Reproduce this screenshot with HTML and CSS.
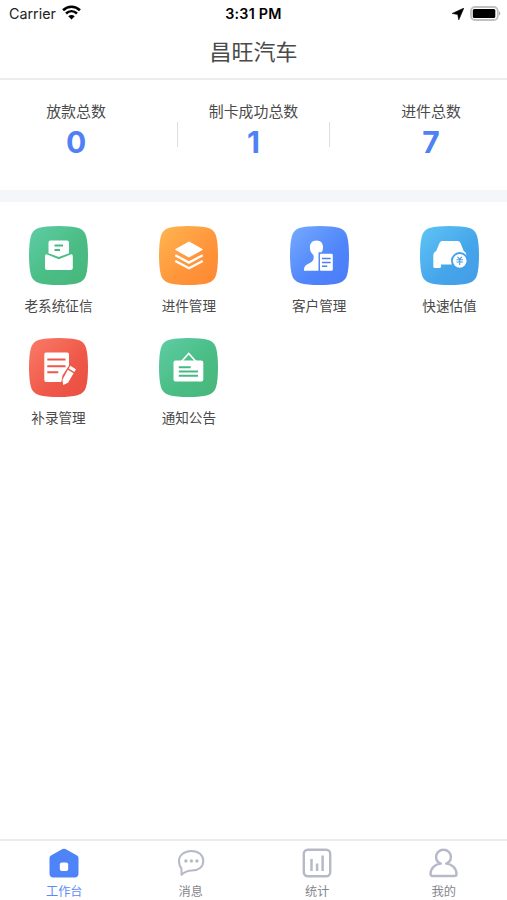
FILE: index.html
```html
<!DOCTYPE html>
<html lang="zh-CN">
<head>
<meta charset="utf-8">
<title>昌旺汽车</title>
<link rel="stylesheet" href="styles.css">
</head>
<body>
<svg class="defs" width="0" height="0" aria-hidden="true">
  <defs>
    <linearGradient id="green" x1="0" y1="0" x2="1" y2="1"><stop offset="0" stop-color="#5fcda6"/><stop offset=".55" stop-color="#4abd85"/><stop offset="1" stop-color="#48b67a"/></linearGradient>
    <linearGradient id="orange" x1="0" y1="0" x2="1" y2="1"><stop offset="0" stop-color="#ffb650"/><stop offset=".6" stop-color="#ff943a"/><stop offset="1" stop-color="#ff8833"/></linearGradient>
    <linearGradient id="blue" x1="0" y1="0" x2="1" y2="1"><stop offset="0" stop-color="#75aaff"/><stop offset=".6" stop-color="#5085fa"/><stop offset="1" stop-color="#4a7bf8"/></linearGradient>
    <linearGradient id="sky" x1="0" y1="0" x2="1" y2="1"><stop offset="0" stop-color="#5fc4f5"/><stop offset=".6" stop-color="#45a5ea"/><stop offset="1" stop-color="#449ce7"/></linearGradient>
    <linearGradient id="red" x1="0" y1="0" x2="1" y2="1"><stop offset="0" stop-color="#fa7b67"/><stop offset=".6" stop-color="#ef5848"/><stop offset="1" stop-color="#e94e42"/></linearGradient>
    <path id="tile" d="M29.500 0C38 0 44.500.7 48.500 1.800C53.300 3.200 55.800 5.700 57.200 10.500C58.300 14.500 59 21 59 29.500C59 38 58.300 44.500 57.200 48.500C55.800 53.300 53.300 55.800 48.500 57.200C44.500 58.300 38 59 29.500 59C21 59 14.500 58.300 10.500 57.200C5.700 55.800 3.200 53.300 1.800 48.500C.7 44.500 0 38 0 29.500C0 21 .7 14.500 1.800 10.500C3.200 5.700 5.700 3.200 10.500 1.800C14.500.7 21 0 29.500 0Z"/>
  </defs>
</svg>
<div class="app">
  <div class="status">
    <div class="carrier">Carrier
      <svg width="19" height="15" viewBox="0 0 18 14"><path d="M1 4.800C5.600.4 12.400.4 17 4.800M3.800 7.900C6.900 5.100 11.100 5.100 14.200 7.900" fill="none" stroke="#000" stroke-width="2.500"/><path d="M9 13.700L5.900 10.600Q9 8.200 12.100 10.600Z"/></svg>
    </div>
    <div class="time">3:31 PM</div>
    <div class="power">
      <svg width="12" height="12" viewBox="0 0 11 11"><path d="M10.900.1L6.200 10.900L5.200 5.900L.1 5Z" stroke="#000" stroke-width=".5" stroke-linejoin="round"/></svg>
      <svg width="31" height="15" viewBox="0 0 31 15"><rect x="1" y="1" width="26.800" height="13" rx="4" fill="#fff" stroke="#c0c0c0" stroke-width="1.800"/><rect x="2.800" y="2.900" width="22.500" height="9.200" rx="1.500"/><path d="M29 5Q31.500 7.300 29 9.700Z" fill="#aaa"/></svg>
    </div>
  </div>
  <h1 class="title">昌旺汽车</h1>

  <section class="stats">
    <div class="stat"><span>放款总数</span><b>0</b></div>
    <div class="stat middle">
      <i class="divider"></i>
      <div class="stat"><span>制卡成功总数</span><b>1</b></div>
      <i class="divider"></i>
    </div>
    <div class="stat"><span>进件总数</span><b>7</b></div>
  </section>

  <main class="menu">
    <a class="entry">
      <svg class="tile" viewBox="0 0 59 59"><use href="#tile" fill="url(#green)"/>
        <path fill="#fff" d="M21.500 14.500H38Q40 14.500 40 16.500V27.200L29.800 31L19.500 27.200V16.500Q19.500 14.500 21.500 14.500ZM17.500 28.300L29.800 33.300L42.200 28.300Q43.800 28.300 43.800 30V42Q43.800 44 41.800 44H18Q16 44 16 42V30Q16 28.300 17.500 28.300Z"/>
        <path d="M25.500 19.500H34M25.500 23.900H31" stroke="#49b984" stroke-width="2"/></svg>
      <span>老系统征信</span>
    </a>
    <a class="entry">
      <svg class="tile" viewBox="0 0 59 59"><use href="#tile" fill="url(#orange)"/>
        <path fill="#fff" stroke="#fff" stroke-linejoin="round" d="M30 16L43.500 23.500L30 31L16.500 23.500Z"/>
        <path fill="none" stroke="#fff" stroke-width="2.300" d="M16.300 29.300L30 36.600L43.700 29.300M16.300 34.900L30 42.200L43.700 34.900"/></svg>
      <span>进件管理</span>
    </a>
    <a class="entry">
      <svg class="tile" viewBox="0 0 59 59"><use href="#tile" fill="url(#blue)"/>
        <path fill="#fff" d="M26.500 14.500C30.800 14.500 33.200 17.500 33 21.500C32.900 24.200 32.300 25.300 31.500 26.300H28.500V44.800H14Q13.500 40.500 17 38.500L21.500 36C23.500 34.700 24.300 31.500 23.300 29C20.900 26.800 19.900 24.500 19.900 21.300C19.900 17.300 22.300 14.500 26.500 14.500ZM31 27.800H41.500Q42.800 27.800 42.800 29V43.600Q42.800 44.800 41.500 44.800H31Q30 44.800 30 43.600V29Q30 27.800 31 27.800Z"/>
        <path d="M32 32.500H40.700M32 36.500H40.700M32 40.300H37.300" stroke="#4d7ff8" stroke-width="1.500"/></svg>
      <span>客户管理</span>
    </a>
    <a class="entry">
      <svg class="tile" viewBox="0 0 59 59"><use href="#tile" fill="url(#sky)"/>
        <path fill="#fff" d="M22.500 15H37.500Q39.700 15 40.500 17L43.600 24.800Q46.300 26 46.300 29V38.500H21V40.500Q21 42 19.500 42H14.800Q13.300 42 13.300 40.500V30Q13 26.800 16.300 24.800L19.500 17Q20.300 15 22.500 15Z"/>
        <circle cx="39.700" cy="34.800" r="8.700" fill="#459fe8"/><circle cx="39.700" cy="34.800" r="6.900" fill="#fff"/>
        <path d="M37.500 30.800L39.700 33.200L41.900 30.800M36.500 33.700H42.900M36.500 36H42.900M39.700 33.200V39" fill="none" stroke="#459fe8" stroke-width="1.100"/></svg>
      <span>快速估值</span>
    </a>
    <a class="entry">
      <svg class="tile" viewBox="0 0 59 59"><use href="#tile" fill="url(#red)"/>
        <path fill="#fff" d="M17 14.600H38.200Q40 14.600 40 16.500V27.500L33.500 37.500L32.300 44H17Q15.300 44 15.300 42V16.500Q15.300 14.600 17 14.600Z"/>
        <path d="M18.300 21.600H36.500M18.300 28.200H36.500M18.300 34.200H29.300" stroke="#ee5747" stroke-width="2"/>
        <path fill="#fff" d="M41.300 27.800L46.900 31.300L45.400 34L39.700 30.500ZM38.900 31.800L44.600 35.300L39 44.800L34.300 47L33.400 41.800Z"/></svg>
      <span>补录管理</span>
    </a>
    <a class="entry">
      <svg class="tile" viewBox="0 0 59 59"><use href="#tile" fill="url(#green)"/>
        <path fill="none" stroke="#fff" stroke-width="1.700" d="M22.500 23.500L29.700 15.500L37 23.500"/>
        <rect x="14.500" y="22.500" width="29.800" height="21" rx="2" fill="#fff"/>
        <path d="M19.800 29.300H31.700M19.800 33.500H39M19.800 37.700H39" stroke="#49b984" stroke-width="1.900"/></svg>
      <span>通知公告</span>
    </a>
  </main>

  <nav class="tabs">
    <a class="tab active">
      <svg width="30" height="30" viewBox="0 0 30 30"><path fill="#4f83f8" d="M13.500 1.100Q15 .2 16.500 1.100L28 7.600Q29.500 8.500 29.500 10V25.500Q29.500 29.500 25.500 29.500H4.500Q.5 29.500 .5 25.500V10Q.5 8.500 2 7.600Z"/><rect x="10.800" y="14.500" width="8.400" height="8.400" rx="2" fill="#fff"/></svg>
      <span>工作台</span>
    </a>
    <a class="tab">
      <svg width="30" height="30" viewBox="0 0 30 30"><path fill="none" stroke="#b7b9c9" stroke-width="2" stroke-linejoin="round" d="M15.500 3C22.500 3 27.300 7.200 27.300 13C27.300 19 22.500 22.500 16 22.500C12 22.500 8 24.500 5.500 26.800V20.500C3.600 18.500 3 16 3 13C3 7 8.500 3 15.500 3Z"/><g fill="#b7b9c9"><circle cx="9.900" cy="13" r="1.700"/><circle cx="15.400" cy="13" r="1.700"/><circle cx="20.900" cy="13" r="1.700"/></g></svg>
      <span>消息</span>
    </a>
    <a class="tab">
      <svg width="30" height="30" viewBox="0 0 30 30"><rect x="1.800" y="1.800" width="26.400" height="26.400" rx="4" fill="none" stroke="#b7b9c9" stroke-width="2.400"/><path d="M9.500 11V23M15.100 15.500V23M20.600 7.500V23" stroke="#b7b9c9" stroke-width="2.500"/></svg>
      <span>统计</span>
    </a>
    <a class="tab">
      <svg width="30" height="30" viewBox="0 0 30 30"><path fill="none" stroke="#b7b9c9" stroke-width="2.400" stroke-linejoin="round" d="M11.800 15.600C9 14.500 7.100 12 7.100 9C7.100 4.900 10.300 1.800 14.500 1.800S21.900 4.900 21.900 9C21.900 12 20 14.500 17.200 15.600C23 16 27.500 20.500 27.500 26Q27.500 28 25.500 28H3.500Q1.500 28 1.500 26C1.500 20.500 6 16 11.800 15.600Z"/></svg>
      <span>我的</span>
    </a>
  </nav>
</div>
</body>
</html>
```
FILE: styles.css
```css
* { box-sizing: border-box; }

body {
  margin: 0;
  background: #fff;
  color: #4a4a4a;
  font-family: Inter, "Noto Sans CJK SC", sans-serif;
}

.defs { position: absolute; }

.app {
  display: flex;
  flex-direction: column;
  height: 900px;
}

.status {
  display: grid;
  grid-template-columns: 1fr auto 1fr;
  align-items: center;
  height: 27px;
  padding: 0 6px 0 9px;
  font-size: 14.300px;
  color: #222;
}

.carrier { display: flex; align-items: center; gap: 6px; }
.carrier svg { margin-top: -3px; }
.time { margin-right: 3px; font-size: 14.300px; font-weight: 600; letter-spacing: .25px; color: #000; }
.power { display: flex; align-items: center; justify-content: flex-end; gap: 6px; }

.title {
  height: 53px;
  margin: 0;
  border-bottom: 2px solid #ededee;
  font-size: 22px;
  font-weight: 400;
  line-height: 51px;
  text-align: center;
}

.stats {
  display: flex;
  justify-content: space-between;
  height: 122px;
  padding-top: 21px;
  border-bottom: 12px solid #f5f6f9;
}

.stat {
  display: flex;
  flex-direction: column;
  align-items: center;
  width: 152px;
  font-size: 14.900px;
  line-height: 22px;
}

.stat.middle {
  flex-direction: row;
  align-items: flex-start;
  width: 153px;
}

.stat b {
  color: #4f80f6;
  font-size: 30px;
  font-weight: 700;
  line-height: 38px;
}

.divider {
  flex: none;
  width: 1px;
  height: 25px;
  margin-top: 21px;
  background: #dedede;
}

.menu {
  display: grid;
  grid-template-columns: repeat(4, 69px);
  grid-auto-rows: 112px;
  justify-content: space-between;
  flex: 1;
  padding: 24px 23px 0 24px;
}

.entry {
  display: flex;
  flex-direction: column;
  align-items: center;
  gap: 11px;
  font-size: 13.600px;
  line-height: 20px;
  white-space: nowrap;
}

.tile { width: 59px; height: 59px; }

.tabs {
  display: grid;
  grid-template-columns: repeat(4, 1fr);
  height: 61px;
  padding: 7px 0 0 1px;
  border-top: 2px solid #ececed;
}

.tab {
  display: flex;
  flex-direction: column;
  align-items: center;
  gap: 5px;
  color: #85868d;
  font-size: 12.200px;
  line-height: 18px;
}

.tab.active { color: #5c8bf8; }
```
